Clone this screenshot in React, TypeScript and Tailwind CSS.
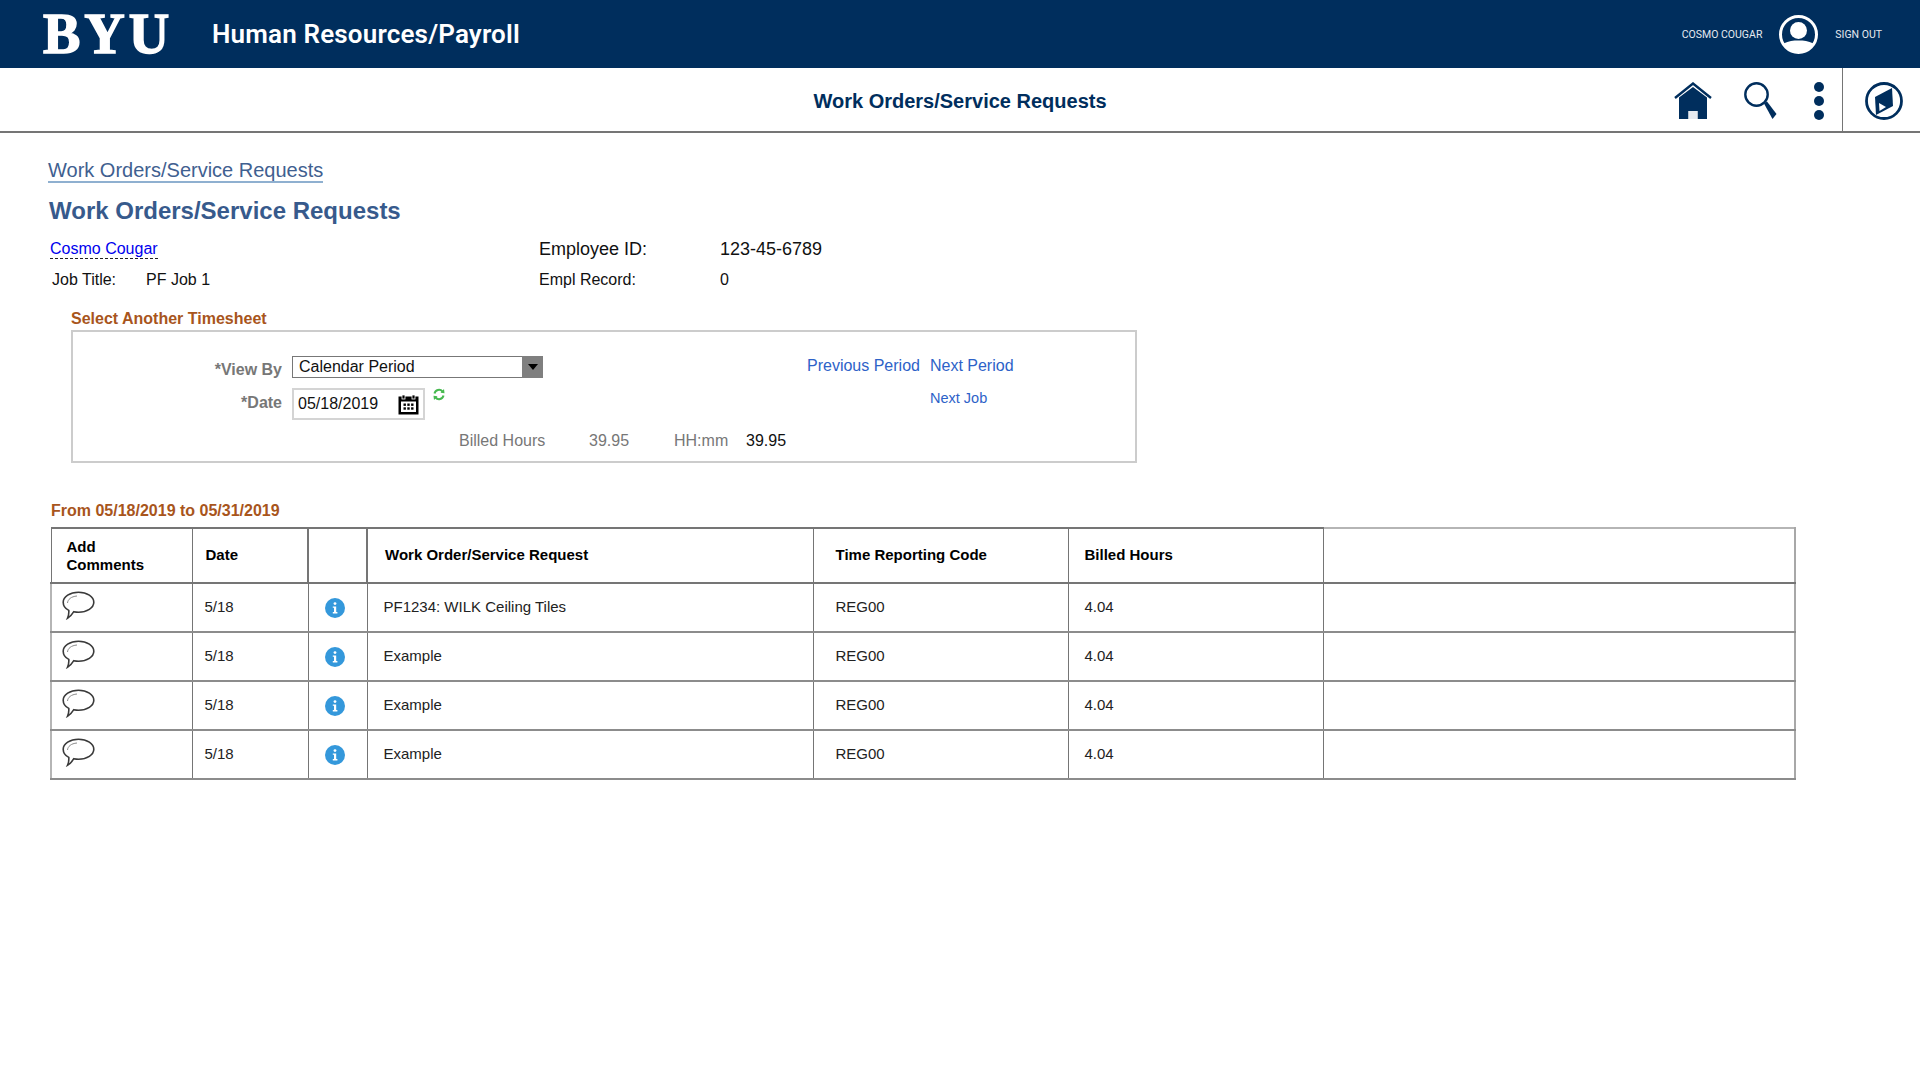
import React from "react";

const NAVY = "#002e5d";

function Home() {
  return (
    <svg width="38" height="38" viewBox="0 0 38 38" className="block">
      <path d="M1 16 L19 1.5 L37 16" fill="none" stroke="#002e5d" strokeWidth="2.4" />
      <path d="M5 15.5 L19 5 L33 15.5 V37 H23.5 V29 H14.5 V37 H5 Z" fill="#002e5d" />
      <rect x="14.5" y="29" width="9" height="8" fill="#e6eaf0" />
    </svg>
  );
}
function Search() {
  return (
    <svg width="33" height="38" viewBox="0 0 33 38" className="block">
      <circle cx="12.5" cy="12.5" r="11.2" fill="none" stroke="#002e5d" strokeWidth="2.4" />
      <path d="M20 21.5 L23 19.5 L32.5 32 L28.5 37 Z" fill="#002e5d" />
    </svg>
  );
}
function Dots() {
  return (
    <svg width="10" height="38" viewBox="0 0 10 38" className="block">
      <circle cx="5" cy="5" r="5" fill="#002e5d" />
      <circle cx="5" cy="19" r="5" fill="#002e5d" />
      <circle cx="5" cy="33" r="5" fill="#002e5d" />
    </svg>
  );
}
function Compass() {
  return (
    <svg width="38" height="38" viewBox="0 0 38 38" className="block">
      <circle cx="19" cy="19" r="17.5" fill="none" stroke="#002e5d" strokeWidth="2.8" />
      <path d="M10 15 L27 6 L28 24 L11 33 Z" fill="#002e5d" />
      <path d="M14 21 L21 25 L14.5 29 Z" fill="#fff" />
    </svg>
  );
}
function User() {
  return (
    <svg width="39" height="39" viewBox="0 0 39 39" className="block">
      <circle cx="19.5" cy="19.5" r="18" fill="none" stroke="#fff" strokeWidth="3" />
      <circle cx="19.5" cy="15.5" r="8.5" fill="#fff" />
      <path d="M4.5 28.5 C10 26 14 25.5 19.5 25.5 C25 25.5 29 26 34.5 28.5 C31 34 25.5 37 19.5 37 C13.5 37 8 34 4.5 28.5 Z" fill="#fff" />
    </svg>
  );
}
function Calendar() {
  return (
    <svg width="21" height="21" viewBox="0 0 21 21" className="block">
      <path d="M0.5 2.5 H20.5 V20.5 H0.5 Z" fill="#000" />
      <rect x="4" y="1" width="3" height="4" fill="#000" stroke="#fff" strokeWidth="0.8" />
      <rect x="14" y="1" width="3" height="4" fill="#000" stroke="#fff" strokeWidth="0.8" />
      <rect x="3" y="7.5" width="15" height="10.5" fill="#fff" />
      <rect x="5.5" y="9.5" width="2.4" height="2.4" fill="#000" />
      <rect x="9.3" y="9.5" width="2.4" height="2.4" fill="#000" />
      <rect x="13.1" y="9.5" width="2.4" height="2.4" fill="#000" />
      <rect x="5.5" y="13.3" width="2.4" height="2.4" fill="#000" />
      <rect x="9.3" y="13.3" width="2.4" height="2.4" fill="#000" />
      <rect x="13.1" y="13.3" width="2.4" height="2.4" fill="#000" />
    </svg>
  );
}
function Refresh() {
  return (
    <svg width="12" height="13" viewBox="0 0 12 13" className="block">
      <path d="M1.5 5.5 A4.6 4.6 0 0 1 9.5 3.5" fill="none" stroke="#46b94f" strokeWidth="2" />
      <path d="M7.5 4.8 L11.5 5.2 L11 1 Z" fill="#46b94f" />
      <path d="M10.5 7.5 A4.6 4.6 0 0 1 2.5 9.5" fill="none" stroke="#46b94f" strokeWidth="2" />
      <path d="M4.5 8.2 L0.5 7.8 L1 12 Z" fill="#46b94f" />
    </svg>
  );
}
function Bubble() {
  return (
    <svg width="33" height="29" viewBox="0 0 33 29" className="block">
      <path
        d="M16.5 1.2 C25 1.2 31.8 5.6 31.8 11.2 C31.8 16.8 25 21.2 16.5 21.2 C14.8 21.2 13.3 21 11.8 20.7 C10.4 23 8 26 5.5 27.3 C6.6 25 7 22.6 6.8 19.4 C3.3 17.6 1.2 14.6 1.2 11.2 C1.2 5.6 8 1.2 16.5 1.2 Z"
        fill="#fff"
        stroke="#3a3a3a"
        strokeWidth="1.6"
      />
      <path d="M5.5 12 C5.8 8.5 9 5.5 15 5" fill="none" stroke="#8a8a8a" strokeWidth="1" />
    </svg>
  );
}
function Info() {
  return (
    <svg width="20" height="20" viewBox="0 0 20 20" className="block">
      <circle cx="10" cy="10" r="10" fill="#3498db" />
      <circle cx="10" cy="5.6" r="1.4" fill="#fff" />
      <path d="M7.8 8.4 H11.2 V14 H12.4 V15.4 H7.8 V14 H9 V9.8 H7.8 Z" fill="#fff" />
    </svg>
  );
}

const rows = ["PF1234: WILK Ceiling Tiles", "Example", "Example", "Example"];
const th = "border-x border-y-2 border-[#757575] p-0 text-left align-middle text-[15px] font-bold text-black";
const td = "border-x border-x-[#757575] border-y-2 border-y-[#8c8c8c] p-0 align-middle text-[15px] text-[#222]";

export default function App() {
  return (
    <div className="min-h-[1080px] bg-white font-['Liberation_Sans',Arial,sans-serif]">
      <header className="flex h-[68px] items-center bg-[#002e5d] pl-[43px] pr-[38px] text-white">
        <span className="w-[169px] font-['Liberation_Serif',serif] text-[56px] font-bold leading-none tracking-[4px] [-webkit-text-stroke:1.5px_white]">
          BYU
        </span>
        <span className="font-['Roboto',sans-serif] text-[26px] font-semibold tracking-[0.17px]">
          Human Resources/Payroll
        </span>
        <div className="ml-auto flex items-center pt-[1px] font-['Roboto',sans-serif] text-[10.5px] text-[#e6eaf0]">
          <span>COSMO COUGAR</span>
          <span className="ml-[17px] mr-[17px]">
            <User />
          </span>
          <span>SIGN OUT</span>
        </div>
      </header>

      <div className="relative flex h-[65px] items-center justify-center border-b-2 border-[#757575] pt-[2px]">
        <h1 className="text-[20px] font-bold" style={{ color: NAVY }}>
          Work Orders/Service Requests
        </h1>
        <div className="absolute right-0 top-0 flex h-[64px] items-center">
          <div className="mr-[32px] pt-[2px]">
            <Home />
          </div>
          <div className="mr-[37px] pt-[2px]">
            <Search />
          </div>
          <div className="mr-[18px] pt-[2px]">
            <Dots />
          </div>
          <div className="flex h-full w-[78px] items-center justify-center border-l border-[#757575] pl-[5px] pt-[2px]">
            <Compass />
          </div>
        </div>
      </div>

      <main className="pl-[48px] pt-[26px]">
        <div className="inline-block border-b-2 border-[#8fb0d0] text-[20px] leading-[22px] text-[#3f6090]">
          Work Orders/Service Requests
        </div>
        <h2 className="ml-[1px] mt-[13px] text-[24px] font-bold leading-[28px] text-[#375a8c]">
          Work Orders/Service Requests
        </h2>

        <div className="mt-[12px] flex h-[24px] items-center">
          <span className="ml-[2px] w-[489px]">
            <a className="inline-block border-b border-dashed border-[#222] text-[16px] leading-[19px] text-[#0000ee]">
              Cosmo Cougar
            </a>
          </span>
          <span className="w-[181px] text-[18px] text-[#111]">Employee ID:</span>
          <span className="text-[18px] text-[#111]">123-45-6789</span>
        </div>
        <div className="mt-[7px] flex h-[24px] items-center text-[16px] text-[#111]">
          <span className="ml-[4px] w-[94px]">Job Title:</span>
          <span className="w-[393px]">PF Job 1</span>
          <span className="w-[181px]">Empl Record:</span>
          <span>0</span>
        </div>

        <div className="ml-[23px] mt-[18px] text-[16px] font-bold leading-[18px] text-[#a8551c]">
          Select Another Timesheet
        </div>
        <section className="ml-[23px] mt-[2px] h-[133px] w-[1066px] border-2 border-[#cccccc] pl-[134px] pt-[24px]">
          <div className="flex">
            <div className="w-[75px] pt-[5px] text-right text-[16px] font-bold leading-[18px] text-[#777]">*View By</div>
            <div className="ml-[10px] flex h-[22px] w-[251px] items-center justify-between border border-r-0 border-[#777] pl-[6px] text-[16px] text-[#111]">
              Calendar Period
              <span className="flex h-[22px] w-[21px] items-center justify-center bg-[#7f7f7f]">
                <span className="h-0 w-0 border-x-[5px] border-t-[6px] border-x-transparent border-t-black" />
              </span>
            </div>
            <div className="ml-[264px] mt-[-2px] flex h-[20px] gap-[10px] text-[16px] text-[#2d62c8]">
              <span>Previous Period</span>
              <span>Next Period</span>
            </div>
          </div>
          <div className="mt-[9px] flex h-[32px]">
            <div className="w-[75px] pt-[6px] text-right text-[16px] font-bold leading-[18px] text-[#777]">*Date</div>
            <div className="ml-[10px] flex h-[32px] w-[133px] items-center justify-between border-2 border-[#d4d4d4] pl-[4px] pr-[4px] text-[16px] text-[#111]">
              05/18/2019
              <Calendar />
            </div>
            <div className="ml-[8px]">
              <Refresh />
            </div>
            <div className="ml-[485px] text-[14.5px] leading-[20px] text-[#2d62c8]">Next Job</div>
          </div>
          <div className="mt-[10px] flex h-[22px] items-center pl-[252px] text-[16px] text-[#777]">
            <span className="w-[130px]">Billed Hours</span>
            <span className="w-[85px]">39.95</span>
            <span className="w-[72px]">HH:mm</span>
            <span className="text-[#111]">39.95</span>
          </div>
        </section>

        <div className="ml-[3px] mt-[39px] text-[16px] font-bold leading-[18px] text-[#a8551c]">
          From 05/18/2019 to 05/31/2019
        </div>

        <table className="ml-[2px] mt-[7px] w-[1744px] table-fixed border-collapse">
          <colgroup>
            <col className="w-[141px]" />
            <col className="w-[116px]" />
            <col className="w-[59px]" />
            <col className="w-[446px]" />
            <col className="w-[255px]" />
            <col className="w-[255px]" />
            <col className="w-[472px]" />
          </colgroup>
          <thead>
            <tr className="h-[55px]">
              <th className={`${th} pl-[15px] leading-[18px]`}>
                Add
                <br />
                Comments
              </th>
              <th className={`${th} pl-[13px]`}>Date</th>
              <th className={`${th} border-x-2`}></th>
              <th className={`${th} pl-[17px]`}>Work Order/Service Request</th>
              <th className={`${th} pl-[22px]`}>Time Reporting Code</th>
              <th className={`${th} pl-[16px]`}>Billed Hours</th>
              <th className={`${th} border-t-[#b5b5b5] border-r-2 border-r-[#a8a8a8]`}></th>
            </tr>
          </thead>
          <tbody>
            {rows.map((r, i) => (
              <tr key={i} className="h-[49px]">
                <td className={`${td} border-l-2 border-l-[#b5b5b5] pl-[10px]`}>
                  <div className="-mt-[4px]">
                    <Bubble />
                  </div>
                </td>
                <td className={`${td} pl-[12px]`}>5/18</td>
                <td className={td}>
                  <div className="ml-[16px]">
                    <Info />
                  </div>
                </td>
                <td className={`${td} pl-[16px]`}>{r}</td>
                <td className={`${td} pl-[22px]`}>REG00</td>
                <td className={`${td} pl-[16px]`}>4.04</td>
                <td className={`${td} border-r-2 border-r-[#a8a8a8]`}></td>
              </tr>
            ))}
          </tbody>
        </table>
      </main>
    </div>
  );
}
